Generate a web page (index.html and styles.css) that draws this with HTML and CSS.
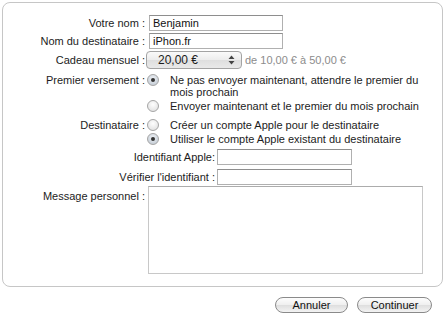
FILE: index.html
```html
<!DOCTYPE html>
<html lang="fr">
<head>
    <meta charset="UTF-8">
    <title>Offrir une allocation</title>
    <link rel="stylesheet" href="styles.css">
</head>
<body>
    <div class="sheet">
        <form class="gift-form">
            <div class="row">
                <label class="lbl">Votre nom :</label>
                <input class="field" type="text" value="Benjamin">
            </div>
            <div class="row">
                <label class="lbl">Nom du destinataire :</label>
                <input class="field" type="text" value="iPhon.fr">
            </div>
            <div class="row">
                <label class="lbl">Cadeau mensuel :</label>
                <div class="popup">
                    <span>20,00 €</span>
                    <svg class="arrows" width="7" height="10" viewBox="0 0 7 10">
                        <path d="M3.5 0.5 L6.5 4 L0.5 4 Z M3.5 9.5 L6.5 6 L0.5 6 Z" fill="#444"/>
                    </svg>
                </div>
                <span class="hint">de 10,00 € à 50,00 €</span>
            </div>
            <div class="row top first-group">
                <label class="lbl">Premier versement :</label>
                <div class="options">
                    <div class="option"><span class="radio on"></span><span class="opt-text">Ne pas envoyer maintenant, attendre le premier du mois prochain</span></div>
                    <div class="option"><span class="radio"></span><span class="opt-text">Envoyer maintenant et le premier du mois prochain</span></div>
                </div>
            </div>
            <div class="row top second-group">
                <label class="lbl">Destinataire :</label>
                <div class="options">
                    <div class="option"><span class="radio"></span><span class="opt-text">Créer un compte Apple pour le destinataire</span></div>
                    <div class="option"><span class="radio on"></span><span class="opt-text">Utiliser le compte Apple existant du destinataire</span></div>
                </div>
            </div>
            <div class="row sub id-row">
                <label class="lbl">Identifiant Apple:</label>
                <input class="field short" type="text">
            </div>
            <div class="row sub">
                <label class="lbl">Vérifier l'identifiant :</label>
                <input class="field short" type="text">
            </div>
            <div class="row top message-row">
                <label class="lbl">Message personnel :</label>
                <textarea class="message"></textarea>
            </div>
        </form>
    </div>
    <div class="actions">
        <button type="button" class="btn cancel">Annuler</button>
        <button type="button" class="btn">Continuer</button>
    </div>
</body>
</html>
```

FILE: styles.css
```css
body {
    margin: 0;
    font-family: "Liberation Sans", Arial, sans-serif;
    font-size: 11px;
    color: #1c1c1c;
    background-color: #fff;
}
.sheet {
    margin: 2px 5px 0 2px;
    height: 285px;
    box-sizing: border-box;
    border: 1px solid #c6c6c6;
    border-radius: 8px;
    padding-top: 12px;
}
.row {
    display: flex;
    align-items: center;
    margin-bottom: 2px;
    line-height: 12px;
}
.row.top {
    align-items: flex-start;
}
.lbl {
    width: 142px;
    flex: none;
    text-align: right;
    margin-right: 4px;
}
.field {
    width: 134px;
    height: 16px;
    box-sizing: border-box;
    margin: 0;
    padding: 0 3px;
    border: 1px solid #b0b0b0;
    border-top-color: #8e8e8e;
    font-family: inherit;
    font-size: 11px;
    color: #111;
    outline: none;
}
.popup {
    margin-left: -3px;
    width: 96px;
    height: 18px;
    box-sizing: border-box;
    display: flex;
    align-items: center;
    justify-content: space-between;
    padding: 0 6px 0 11px;
    border: 1px solid #a3a3a3;
    border-radius: 4px;
    background: linear-gradient(#fafafa, #ececec 50%, #dedede 51%, #e9e9e9);
    font-size: 12px;
}
.hint {
    margin-left: 3px;
    color: #8c8c8c;
}
.first-group {
    margin-top: 5px;
}
.second-group {
    margin-top: 5px;
}
.options {
    margin-left: -2px;
}
.option {
    display: flex;
    align-items: flex-start;
    margin-bottom: 2px;
}
.radio {
    flex: none;
    width: 12px;
    height: 12px;
    box-sizing: border-box;
    border: 1px solid #a5a5a5;
    border-radius: 50%;
    background: radial-gradient(circle at 50% 35%, #fefefe, #dcdcdc);
    margin-right: 11px;
    position: relative;
}
.radio.on {
    background: radial-gradient(circle at 50% 35%, #eef1f5, #bcc5cf);
}
.radio.on::after {
    content: "";
    position: absolute;
    left: 3px;
    top: 3px;
    width: 4px;
    height: 4px;
    border-radius: 50%;
    background-color: #333;
}
.opt-text {
    max-width: 262px;
}
.id-row {
    margin-top: 2px;
}
.row.sub {
    margin-bottom: 4px;
}
.row.sub .lbl {
    width: 212px;
    margin-right: 2px;
}
.short {
    width: 135px;
}
.message-row {
    margin-top: -3px;
}
.message-row .lbl {
    padding-top: 4px;
}
.message {
    width: 275px;
    height: 88px;
    box-sizing: border-box;
    margin: 0 0 0 -1px;
    border: 1px solid #c8c8c8;
    border-top-color: #acacac;
    resize: none;
    outline: none;
}
.actions {
    display: flex;
    justify-content: flex-end;
    gap: 9px;
    padding: 10px 16px 0 0;
}
.btn {
    width: 75px;
    height: 16px;
    box-sizing: border-box;
    padding: 0;
    border: 1px solid #8a8a8a;
    border-radius: 8px;
    background: linear-gradient(#fdfdfd, #efefef 50%, #dedede 51%, #f3f3f3);
    font-family: inherit;
    font-size: 11px;
    color: #111;
}
.btn.cancel {
    width: 73px;
}
```
